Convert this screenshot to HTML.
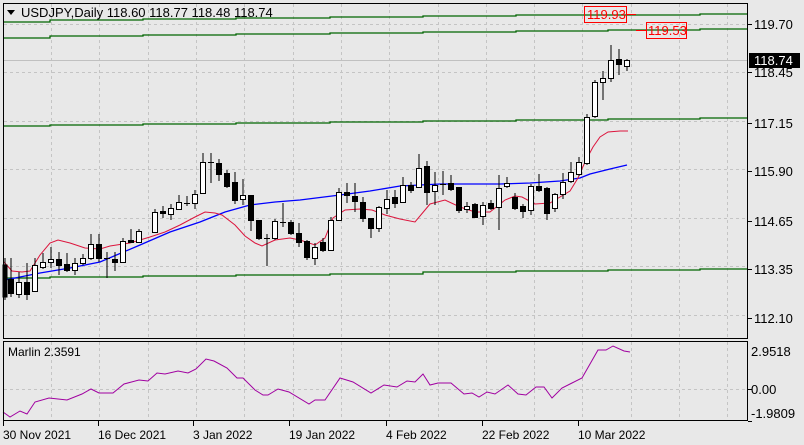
<!DOCTYPE html>
<html><head><meta charset="utf-8"><style>
html,body{margin:0;padding:0;background:#e8e8e8;}
svg{display:block;font-family:"Liberation Sans",Tahoma,sans-serif;}
</style></head><body>
<svg width="804" height="445" viewBox="0 0 804 445" xmlns="http://www.w3.org/2000/svg">
<rect width="804" height="445" fill="#e8e8e8"/>
<g stroke="#c4c4c4" stroke-dasharray="3,3" stroke-width="1">
<line x1="51.5" y1="4" x2="51.5" y2="338"/><line x1="99.5" y1="4" x2="99.5" y2="338"/><line x1="148.5" y1="4" x2="148.5" y2="338"/><line x1="196.5" y1="4" x2="196.5" y2="338"/><line x1="244.5" y1="4" x2="244.5" y2="338"/><line x1="293.5" y1="4" x2="293.5" y2="338"/><line x1="341.5" y1="4" x2="341.5" y2="338"/><line x1="389.5" y1="4" x2="389.5" y2="338"/><line x1="438.5" y1="4" x2="438.5" y2="338"/><line x1="486.5" y1="4" x2="486.5" y2="338"/><line x1="534.5" y1="4" x2="534.5" y2="338"/><line x1="582.5" y1="4" x2="582.5" y2="338"/><line x1="631.5" y1="4" x2="631.5" y2="338"/><line x1="679.5" y1="4" x2="679.5" y2="338"/><line x1="727.5" y1="4" x2="727.5" y2="338"/>
<line x1="4" y1="24.5" x2="747" y2="24.5"/><line x1="4" y1="72.5" x2="747" y2="72.5"/><line x1="4" y1="121.5" x2="747" y2="121.5"/><line x1="4" y1="169.5" x2="747" y2="169.5"/><line x1="4" y1="218.5" x2="747" y2="218.5"/><line x1="4" y1="266.5" x2="747" y2="266.5"/><line x1="4" y1="315.5" x2="747" y2="315.5"/>
<line x1="51.5" y1="342" x2="51.5" y2="420"/><line x1="99.5" y1="342" x2="99.5" y2="420"/><line x1="148.5" y1="342" x2="148.5" y2="420"/><line x1="196.5" y1="342" x2="196.5" y2="420"/><line x1="244.5" y1="342" x2="244.5" y2="420"/><line x1="293.5" y1="342" x2="293.5" y2="420"/><line x1="341.5" y1="342" x2="341.5" y2="420"/><line x1="389.5" y1="342" x2="389.5" y2="420"/><line x1="438.5" y1="342" x2="438.5" y2="420"/><line x1="486.5" y1="342" x2="486.5" y2="420"/><line x1="534.5" y1="342" x2="534.5" y2="420"/><line x1="582.5" y1="342" x2="582.5" y2="420"/><line x1="631.5" y1="342" x2="631.5" y2="420"/><line x1="679.5" y1="342" x2="679.5" y2="420"/><line x1="727.5" y1="342" x2="727.5" y2="420"/>
<line x1="4" y1="389.5" x2="747" y2="389.5"/>
</g>
<line x1="4" y1="60.5" x2="747" y2="60.5" stroke="#c0c0c0"/>
<g stroke="#006400" stroke-width="1.3" fill="none">
<polyline points="4,22 50,22 50,20 143,20 143,19 236,19 236,18 330,18 330,17 423,17 423,16 516,16 516,15 700,15 700,14 747,14"/>
<polyline points="4,38 50,38 50,36 143,36 143,35 236,35 236,34 330,34 330,33 423,33 423,32 516,32 516,31 608,31 608,30 700,30 700,29 747,29"/>
<polyline points="4,126 50,126 50,125 143,125 143,124 236,124 236,123 330,123 330,122 423,122 423,121 516,121 516,120 608,120 608,119 700,119 700,118 747,118"/>
<polyline points="4,278 50,278 50,277 143,277 143,276 236,276 236,275 330,275 330,274 423,274 423,272 516,272 516,271 608,271 608,270 700,270 700,269 747,269"/>
</g>
<g stroke="#ff0000" fill="none">
<rect x="584.5" y="6.5" width="42" height="16"/>
<line x1="626" y1="14.5" x2="636" y2="14.5"/>
<line x1="636" y1="30.5" x2="646" y2="30.5"/>
<rect x="646.5" y="22.5" width="40" height="16"/>
</g>
<text x="587" y="19" font-size="13" fill="#ff0000">119.93</text>
<text x="648" y="35" font-size="13" fill="#ff0000">119.53</text>
<polyline fill="none" stroke="#0000ff" stroke-width="1.3" points="5,280 40,273 70,268 100,262 140,245 170,232 200,222 225,212 250,205 275,202 300,200 340,195 370,191 400,186 440,184 470,184 500,184 530,183 560,181 580,178 590,174 610,169 627,165"/>
<polyline fill="none" stroke="#dc143c" stroke-width="1" points="4,262 12,271 22,272 30,271 40,255 50,243 58,240 70,243 85,248 100,249 110,246 130,243 150,237 165,232 180,225 195,217 205,212 215,213 222,215 235,225 245,236 255,243 262,246 275,240 290,238 300,240 315,245 325,238 333,218 345,210 360,209 372,210 385,215 400,219 415,222 425,210 430,204 445,200 460,207 475,212 490,212 505,200 515,196 522,197 535,204 550,203 560,197 570,191 578,178 585,162 593,147 600,137 608,132 620,131 628,131"/>
<g stroke="#000" stroke-width="1">
<path d="M5 258V300M11 258V297M19 272V298M27 263V300M35 258V292M43 253V269M51 247V268M59 252V275M67 253V272M75 258V275M83 254V265M91 234V260M99 234V262M107 252V278M115 252V271M123 238V263M131 229V243M139 229V243M155 209V233M163 206V218M171 204V220M179 195V210M187 196V206M195 190V209M203 153V193M211 153V183M219 159V181M227 170V188M235 172V204M243 179V205M251 195V231M259 220V240M267 234V266M275 219V240M283 203V227M291 220V235M299 223V247M307 240V260M315 243V265M323 238V252M331 217V250M339 188V220M347 183V203M355 183V212M363 197V222M371 218V238M379 206V232M387 190V214M395 190V208M403 177V203M411 182V193M419 154V187M427 161V205M435 172V205M443 171V195M451 175V191M459 187V213M467 202V213M475 203V218M483 202V225M491 200V210M499 175V230M507 177V188M515 193V210M523 204V218M531 184V215M539 174V192M547 187V220M555 193V212M563 173V199M571 162V183M579 157V176M587 114V165M595 80V118M603 71V100M611 45V82M619 49V75M627 59V71"/>
</g>
<g stroke="#000" stroke-width="1" fill="#000">
<rect x="3" y="265" width="4" height="32"/><rect x="8.5" y="279.5" width="5" height="14"/><rect x="24.5" y="282.5" width="5" height="12"/><rect x="56.5" y="259.5" width="5" height="6"/><rect x="64.5" y="264.5" width="5" height="6"/><rect x="96.5" y="244.5" width="5" height="14"/><rect x="112.5" y="259.5" width="5" height="3"/><rect x="128.5" y="240.5" width="5" height="2"/><rect x="160.5" y="211.5" width="5" height="2"/><rect x="216.5" y="163.5" width="5" height="11"/><rect x="224.5" y="173.5" width="5" height="13"/><rect x="232.5" y="182.5" width="5" height="18"/><rect x="248.5" y="195.5" width="5" height="25"/><rect x="256.5" y="220.5" width="5" height="18"/><rect x="288.5" y="222.5" width="5" height="11"/><rect x="296.5" y="233.5" width="5" height="9"/><rect x="304.5" y="241.5" width="5" height="16"/><rect x="320.5" y="242.5" width="5" height="8"/><rect x="344.5" y="192.5" width="5" height="3"/><rect x="352.5" y="196.5" width="5" height="5"/><rect x="360.5" y="202.5" width="5" height="16"/><rect x="368.5" y="218.5" width="5" height="10"/><rect x="392.5" y="197.5" width="5" height="6"/><rect x="408.5" y="185.5" width="5" height="5"/><rect x="424.5" y="166.5" width="5" height="26"/><rect x="448.5" y="183.5" width="5" height="6"/><rect x="456.5" y="187.5" width="5" height="23"/><rect x="472.5" y="204.5" width="5" height="13"/><rect x="488.5" y="203.5" width="5" height="5"/><rect x="512.5" y="197.5" width="5" height="11"/><rect x="520.5" y="206.5" width="5" height="5"/><rect x="536.5" y="186.5" width="5" height="4"/><rect x="544.5" y="188.5" width="5" height="25"/><rect x="616.5" y="59.5" width="5" height="5"/>
<path d="M104 258.5h6M184 203.5h6M208 162.5h6M264 238.5h6M280 222.5h6M440 184.5h6"/>
</g>
<g stroke="#000" stroke-width="1" fill="#fff">
<rect x="16.5" y="282.5" width="5" height="12"/><rect x="32.5" y="265.5" width="5" height="26"/><rect x="40.5" y="262.5" width="5" height="5"/><rect x="48.5" y="259.5" width="5" height="3"/><rect x="72.5" y="263.5" width="5" height="7"/><rect x="80.5" y="258.5" width="5" height="5"/><rect x="88.5" y="244.5" width="5" height="14"/><rect x="120.5" y="241.5" width="5" height="21"/><rect x="136.5" y="231.5" width="5" height="11"/><rect x="152.5" y="212.5" width="5" height="20"/><rect x="168.5" y="208.5" width="5" height="6"/><rect x="176.5" y="202.5" width="5" height="7"/><rect x="192.5" y="194.5" width="5" height="9"/><rect x="200.5" y="162.5" width="5" height="31"/><rect x="240.5" y="195.5" width="5" height="4"/><rect x="272.5" y="221.5" width="5" height="17"/><rect x="312.5" y="247.5" width="5" height="11"/><rect x="328.5" y="220.5" width="5" height="30"/><rect x="336.5" y="192.5" width="5" height="28"/><rect x="376.5" y="207.5" width="5" height="21"/><rect x="384.5" y="199.5" width="5" height="9"/><rect x="400.5" y="185.5" width="5" height="17"/><rect x="416.5" y="168.5" width="5" height="19"/><rect x="432.5" y="185.5" width="5" height="6"/><rect x="464.5" y="206.5" width="5" height="3"/><rect x="480.5" y="205.5" width="5" height="11"/><rect x="496.5" y="188.5" width="5" height="19"/><rect x="504.5" y="183.5" width="5" height="3"/><rect x="528.5" y="186.5" width="5" height="24"/><rect x="552.5" y="194.5" width="5" height="14"/><rect x="560.5" y="182.5" width="5" height="12"/><rect x="568.5" y="172.5" width="5" height="9"/><rect x="576.5" y="162.5" width="5" height="12"/><rect x="584.5" y="117.5" width="5" height="46"/><rect x="592.5" y="82.5" width="5" height="34"/><rect x="600.5" y="78.5" width="5" height="4"/><rect x="608.5" y="60.5" width="5" height="18"/><rect x="624.5" y="60.5" width="5" height="6"/>
</g>
<polyline fill="none" stroke="#a000a0" stroke-width="1" points="3,412 10,417 20,411 27,414 35,402 49,398 67,400 82,394 91,389 99,393 113,393 124,384 139,380 148,381 157,373 165,374 178,371 188,373 196,369 206,359 214,361 227,368 237,378 243,378 255,390 263,395 268,395 278,389 289,392 309,404 315,400 325,400 340,378 353,382 371,393 384,385 397,387 407,381 415,382 423,374 430,385 438,383 451,383 464,394 472,393 479,397 487,392 495,394 508,385 518,394 526,395 536,387 544,387 552,398 562,388 572,383 582,378 598,350 606,350 613,346 624,351 630,352"/>
<g fill="none" stroke="#000" stroke-width="1">
<rect x="3.5" y="3.5" width="744" height="335"/>
<rect x="3.5" y="341.5" width="744" height="79"/>
</g>
<path d="M7 10h8l-4 5z" fill="#000"/>
<text x="21" y="17" font-size="13" fill="#000">USDJPY,Daily  118.60 118.77 118.48 118.74</text>
<text x="8" y="356" font-size="12" fill="#000">Marlin 2.3591</text>
<g stroke="#000"><path d="M748 24.5h4M748 72.5h4M748 123.5h4M748 171.5h4M748 221.5h4M748 269.5h4M748 318.5h4M748 421.5h4M748 389.5h4"/></g>
<g font-size="13" fill="#000">
<text x="754" y="29">119.70</text>
<text x="754" y="77">118.45</text>
<text x="754" y="128">117.15</text>
<text x="754" y="176">115.90</text>
<text x="754" y="226">114.65</text>
<text x="754" y="274">113.35</text>
<text x="754" y="323">112.10</text>
<text x="751" y="356">2.9518</text>
<text x="751" y="394">0.00</text>
<text x="751" y="418">-1.9809</text>
</g>
<rect x="749" y="53" width="51" height="15" fill="#000"/>
<text x="754" y="65" font-size="13" fill="#fff">118.74</text>
<g stroke="#000"><path d="M3.5 421v5M98.5 421v5M193.5 421v5M289.5 421v5M386.5 421v5M482.5 421v5M578.5 421v5"/></g>
<g font-size="12" fill="#000">
<text x="3" y="439">30 Nov 2021</text>
<text x="98" y="439">16 Dec 2021</text>
<text x="193" y="439">3 Jan 2022</text>
<text x="289" y="439">19 Jan 2022</text>
<text x="386" y="439">4 Feb 2022</text>
<text x="482" y="439">22 Feb 2022</text>
<text x="578" y="439">10 Mar 2022</text>
</g>
</svg>
</body></html>
